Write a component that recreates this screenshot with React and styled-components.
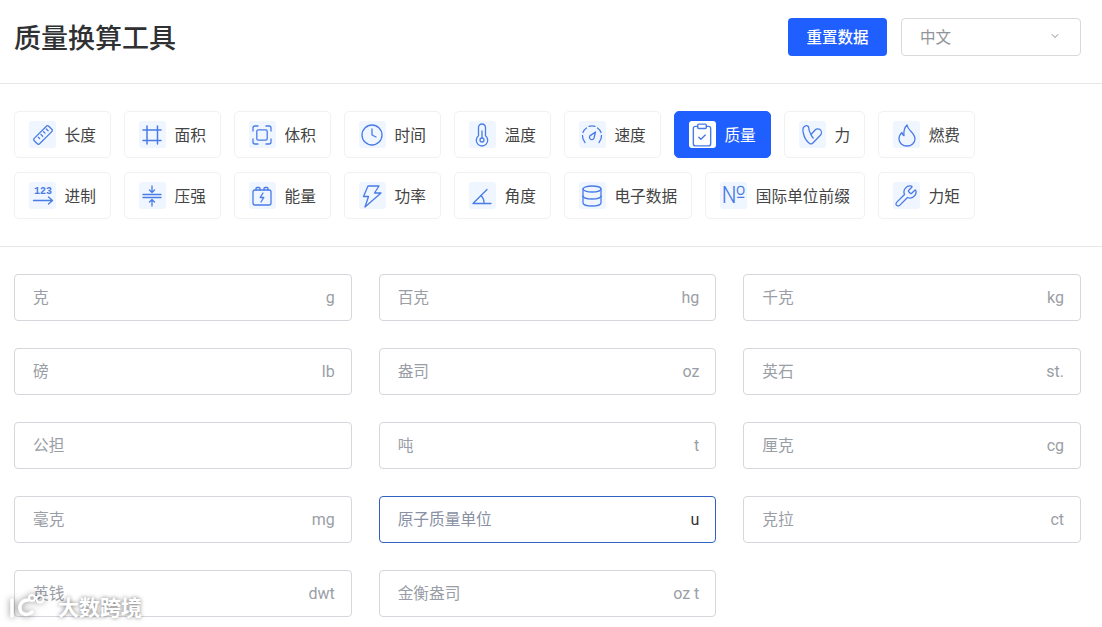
import styled, { createGlobalStyle } from 'styled-components';
import { Clock, Database, ClipboardCheck, Wrench, ChevronDown } from 'lucide-react';

const cjk = '"Noto Sans CJK SC", sans-serif';

const Global = createGlobalStyle`
  * { box-sizing: border-box; }
  html, body { margin: 0; padding: 0; background: #fff; overflow: hidden; }
  body { font-family: ${cjk}; color: #333; }
`;

const Svg = ({ children, size = 24 }) => (
  <svg width={size} height={size} viewBox="0 0 24 24" fill="none" stroke="currentColor" strokeWidth="1.3" strokeLinecap="round" strokeLinejoin="round">
    {children}
  </svg>
);

const Numero = styled.span`
  font-family: Roboto, "Noto Sans", sans-serif;
  font-size: 24px;
  font-weight: 300;
  line-height: 27px;
`;

const RulerIcon = () => (
  <Svg>
    <path d="M3.200 15.400 15.400 3.200a1.600 1.600 0 0 1 2.300 0l3.100 3.100a1.600 1.600 0 0 1 0 2.300L8.600 20.800a1.600 1.600 0 0 1-2.300 0l-3.100-3.100a1.600 1.600 0 0 1 0-2.300Z" />
    <path d="m15.300 6 1.800 1.800M12.600 8.700 14 10.100M9.900 11.400l1.800 1.800M7.200 14.100l1.400 1.400" />
  </Svg>
);
const FrameIcon = () => (
  <Svg>
    <path d="M3 7h18M3 17.500h18M7 3v18M17.500 3v18" strokeWidth="1.500" />
  </Svg>
);
const VolumeIcon = () => (
  <Svg>
    <path d="M3 8V5a2 2 0 0 1 2-2h3M16 3h3a2 2 0 0 1 2 2v3M21 16v3a2 2 0 0 1-2 2h-3M8 21H5a2 2 0 0 1-2-2v-3" />
    <rect x="6.800" y="6.800" width="10.400" height="10.400" rx="1.400" />
  </Svg>
);
const ThermoIcon = () => (
  <Svg>
    <path d="M8.500 4.500a3.500 3.500 0 0 1 7 0v8.300a5.700 5.700 0 1 1-7 0Z" />
    <circle cx="12" cy="17" r="2" />
    <path d="M12 15V8" />
  </Svg>
);
const GaugeIcon = () => (
  <Svg>
    <path d="M5 19.500A10 10 0 0 1 2.500 12.500M19 19.500a10 10 0 0 0 2.500-7" />
    <path d="M3 9.500A9.500 9.500 0 0 1 6.500 5M9 3.400a9.500 9.500 0 0 1 6 0M17.500 5a9.500 9.500 0 0 1 3.500 4.500" />
    <path d="M15.500 9 14 15a2.300 2.300 0 1 1-3.700-2.400Z" />
  </Svg>
);
const Num123Icon = () => (
  <Svg>
    <text x="12" y="10" textAnchor="middle" fontFamily='"Liberation Mono", monospace' fontSize="10" fontWeight="700" fill="currentColor" stroke="none">123</text>
    <path d="M2.500 16.500h19M17.500 13l4 3.500-4 3.500" />
  </Svg>
);
const PressureIcon = () => (
  <Svg>
    <path d="M3 10.500h18M3 13.500h18M12 2v6.500M9.500 6 12 8.500 14.500 6M12 22v-6.500M9.500 18l2.500-2.500 2.500 2.500" />
  </Svg>
);
const BatteryIcon = () => (
  <Svg>
    <rect x="3" y="6" width="18" height="15" rx="2" />
    <path d="M6 6V4.500a1 1 0 0 1 1-1h2a1 1 0 0 1 1 1V6M14 6V4.500a1 1 0 0 1 1-1h2a1 1 0 0 1 1 1V6" />
    <path d="m13 9-2.800 4.500h3.600L11 18" />
  </Svg>
);
const BoltIcon = () => (
  <Svg>
    <path d="M8 2h11l-4.500 7H21L5 23l3.500-10.500H3.500Z" />
  </Svg>
);
const AngleIcon = () => (
  <Svg>
    <path d="M21 19.500H3L17 5.500" />
    <path d="M11 11.500a10.500 10.500 0 0 1 3 8" />
  </Svg>
);
const ForceIcon = () => (
  <Svg>
    <path d="M5.500 2.800C3 3.500 2.500 6.500 3.300 10c.8 3.700 3 8 6 10.200 1.300 1 2.800.7 3.800-.4l7.300-7.600c1.400-1.500 1.400-3.900 0-5.300-1.500-1.500-3.900-1.400-5.300.1L11 11.500C9.600 9.500 8.800 7 8.800 5c0-1.700-1.500-2.600-3.300-2.200Z" />
    <path d="M11 11.500c.5 1.300 1.300 2.500 2.200 3.500" />
  </Svg>
);
const FlameIcon = () => (
  <Svg>
    <path d="M12 2c.5 3 2 4.500 4 6.500 2.500 2.500 4 4.500 4 7.500a8 7 0 0 1-16 0c0-3 1.300-5 3-6.500.2 1.500.8 2.500 2 3.200C8.500 8.500 9.500 4.500 12 2Z" />
  </Svg>
);

const rows = [
  [
    { name: '长度', icon: <RulerIcon /> },
    { name: '面积', icon: <FrameIcon /> },
    { name: '体积', icon: <VolumeIcon /> },
    { name: '时间', icon: <Clock size={24} strokeWidth={1.3} /> },
    { name: '温度', icon: <ThermoIcon /> },
    { name: '速度', icon: <GaugeIcon /> },
    { name: '质量', icon: <ClipboardCheck size={26} strokeWidth={1.3} />, active: true },
    { name: '力', icon: <ForceIcon /> },
    { name: '燃费', icon: <FlameIcon /> },
  ],
  [
    { name: '进制', icon: <Num123Icon /> },
    { name: '压强', icon: <PressureIcon /> },
    { name: '能量', icon: <BatteryIcon /> },
    { name: '功率', icon: <BoltIcon /> },
    { name: '角度', icon: <AngleIcon /> },
    { name: '电子数据', icon: <Database size={24} strokeWidth={1.3} /> },
    { name: '国际单位前缀', icon: <Numero>№</Numero> },
    { name: '力矩', icon: <Wrench size={24} strokeWidth={1.3} /> },
  ],
];

const fields = [
  ['克', 'g'], ['百克', 'hg'], ['千克', 'kg'],
  ['磅', 'lb'], ['盎司', 'oz'], ['英石', 'st.'],
  ['公担', ''], ['吨', 't'], ['厘克', 'cg'],
  ['毫克', 'mg'], ['原子质量单位', 'u', true], ['克拉', 'ct'],
  ['英钱', 'dwt'], ['金衡盎司', 'oz t'],
];

export default function App() {
  return (
    <Page>
      <Global />
      <Header>
        <Title>质量换算工具</Title>
        <Actions>
          <ResetButton>重置数据</ResetButton>
          <LangSelect>
            <span>中文</span>
            <ChevronDown size={12} strokeWidth={1.5} />
          </LangSelect>
        </Actions>
      </Header>
      <TabSection>
        {rows.map((row, i) => (
          <TabRow key={i}>
            {row.map((t) => (
              <Tab key={t.name} $active={t.active}>
                <IconBox $active={t.active}>{t.icon}</IconBox>
                <TabName>{t.name}</TabName>
              </Tab>
            ))}
          </TabRow>
        ))}
      </TabSection>
      <FieldGrid>
        {fields.map(([label, unit, focused]) => (
          <Field key={label} $focused={focused}>
            <FieldLabel $focused={focused}>{label}</FieldLabel>
            <Unit $focused={focused}>{unit}</Unit>
          </Field>
        ))}
      </FieldGrid>
      <Watermark>
        <svg width="44" height="30" viewBox="0 0 44 30" fill="none" stroke="#fff" strokeWidth="3.500" strokeLinecap="round">
          <path d="M4 9v16" />
          <path d="M24 21c-4 4-11 3-12-3-1-5 3-9 8-9" />
          <circle cx="24" cy="7" r="3" strokeWidth="2" />
          <circle cx="32" cy="8" r="3.500" strokeWidth="2" />
        </svg>
        <span>大数跨境</span>
      </Watermark>
    </Page>
  );
}

const Page = styled.div`
  position: relative;
  width: 1102px;
  height: 627px;
  overflow: hidden;
`;

const Header = styled.header`
  height: 84px;
  padding: 0 21px 9px 14px;
  display: flex;
  align-items: center;
  justify-content: space-between;
  border-bottom: 1px solid #e5e7eb;
`;

const Title = styled.h1`
  margin: 0;
  font-size: 27px;
  font-weight: 500;
  color: #303133;
  line-height: 38px;
`;

const Actions = styled.div`
  display: flex;
  gap: 14px;
`;

const ResetButton = styled.button`
  width: 99px;
  height: 38px;
  padding: 0 0 2px;
  border: 0;
  border-radius: 4px;
  background: #1f5eff;
  color: #fff;
  font: 500 15.500px ${cjk};
`;

const LangSelect = styled.div`
  width: 180px;
  height: 38px;
  padding: 0 19px 2px 18px;
  display: flex;
  align-items: center;
  justify-content: space-between;
  border: 1px solid #d9d9d9;
  border-radius: 4px;
  color: #909399;
  font-size: 15.500px;
  svg {
    color: #666;
  }
`;

const TabSection = styled.section`
  padding: 27px 14px 27px;
  display: flex;
  flex-direction: column;
  gap: 14px;
  border-bottom: 1px solid #e5e7eb;
`;

const TabRow = styled.div`
  display: flex;
  gap: 13px;
`;

const Tab = styled.div`
  height: 47px;
  padding: 0 14px;
  display: flex;
  align-items: center;
  gap: 8.600px;
  border: 1px solid ${(p) => (p.$active ? '#1f5eff' : '#f0f1f3')};
  border-radius: 5px;
  background: ${(p) => (p.$active ? '#1f5eff' : '#fff')};
  color: ${(p) => (p.$active ? '#fff' : '#444')};
  font-size: 15.700px;
  white-space: nowrap;
`;

const TabName = styled.span`
  margin-bottom: 1px;
`;

const IconBox = styled.div`
  width: 27px;
  height: 27px;
  flex: none;
  display: flex;
  align-items: center;
  justify-content: center;
  border-radius: 3px;
  background: ${(p) => (p.$active ? '#fff' : '#eff6ff')};
  color: #4a7be6;
`;

const FieldGrid = styled.section`
  padding: 27px 21px 10px 14px;
  display: grid;
  grid-template-columns: repeat(3, 1fr);
  column-gap: 27px;
  row-gap: 27px;
`;

const Field = styled.div`
  height: 47px;
  padding: 0 16px 0 18px;
  display: flex;
  align-items: center;
  justify-content: space-between;
  border: 1px solid ${(p) => (p.$focused ? '#2f62c4' : '#d4d7dc')};
  border-radius: 4px;
  font-size: 15.700px;
`;

const FieldLabel = styled.span`
  margin-bottom: 3px;
  color: ${(p) => (p.$focused ? '#8a90a3' : '#9a9ea6')};
`;

const Unit = styled.span`
  font-family: Roboto, sans-serif;
  font-size: 16px;
  color: ${(p) => (p.$focused ? '#333' : '#9a9ea6')};
`;

const Watermark = styled.div`
  position: absolute;
  left: 8px;
  bottom: 6px;
  display: flex;
  align-items: center;
  gap: 6px;
  color: #fff;
  font-size: 21px;
  font-weight: 700;
  text-shadow: 0 0 4px rgba(0, 0, 0, 0.55);
  svg {
    filter: drop-shadow(0 0 3px rgba(0, 0, 0, 0.5));
  }
`;
